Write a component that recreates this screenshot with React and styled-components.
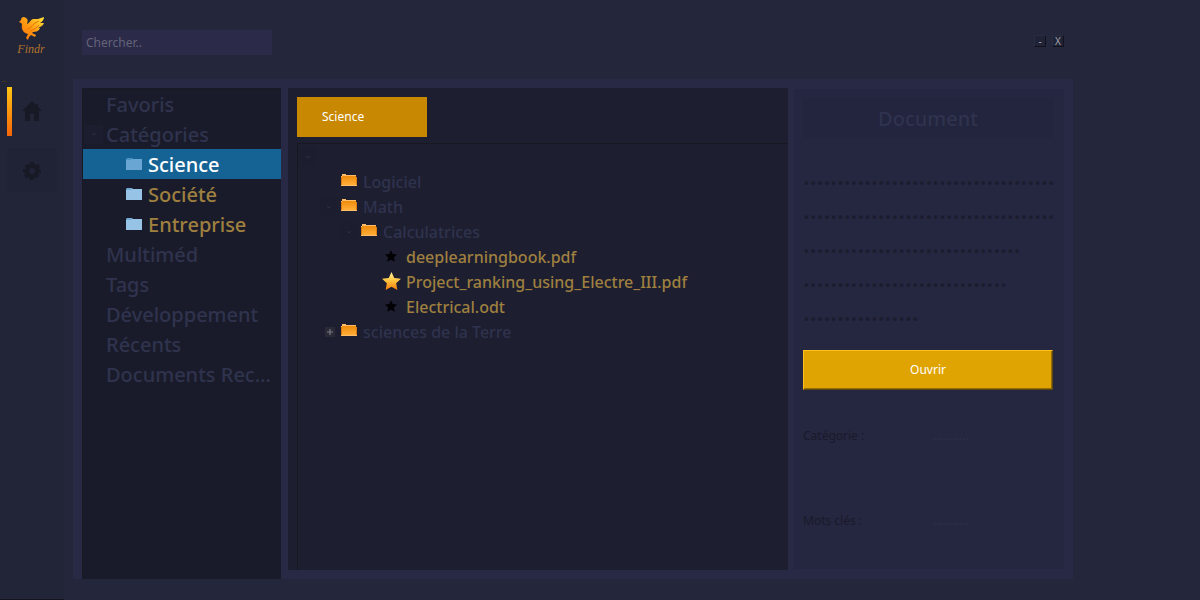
import React from "react";
import styled, { createGlobalStyle } from "styled-components";

const GlobalStyle = createGlobalStyle`
  * { box-sizing: border-box; }
  body {
    margin: 0;
    background: #24263b;
    font-family: "Noto Sans", sans-serif;
    font-size: 12px;
  }
  button, input { font-family: inherit; font-size: inherit; }
  ul { list-style: none; margin: 0; padding: 0; }
`;

const Window = styled.div`
  display: flex;
  min-height: 100vh;
`;

const Sidebar = styled.nav`
  display: flex;
  flex-direction: column;
  flex: 0 0 64px;
  background: #222438;
  border-bottom: 1px solid #14131f;
`;

const Brand = styled.div`
  display: flex;
  flex-direction: column;
  align-items: center;
  height: 80px;
  margin-right: 2px;
  padding-top: 16px;
`;

const BrandName = styled.span`
  display: block;
  margin-top: 1px;
  font-family: "Liberation Serif", serif;
  font-style: italic;
  font-size: 12px;
  line-height: 16px;
  color: #b0742c;
`;

const SideMark = styled.span`
  width: 5px;
  height: 1px;
  margin: 1px 0 5px 2px;
  background: #3c3528;
`;

const SideItem = styled.button`
  display: flex;
  align-items: center;
  justify-content: center;
  align-self: flex-start;
  width: 50px;
  height: ${(p) => (p.$active ? 49 : 44)}px;
  margin: 0 0 12px 7px;
  padding: ${(p) => (p.$active ? "0 5px 2px 0" : "2px 5px 0")};
  border: 0;
  border-left: ${(p) => (p.$active ? "5px solid" : "0")};
  border-image: ${(p) => (p.$active ? "linear-gradient(#ffc814, #f56208) 1" : "none")};
  background: ${(p) => (p.$active ? "transparent" : "#202236")};
`;

const Main = styled.main`
  display: flex;
  flex-direction: column;
  flex: 1;
  min-width: 0;
  padding: 0 127px 21px 9px;
`;

const Toolbar = styled.header`
  display: flex;
  justify-content: space-between;
  align-items: flex-start;
  height: 79px;
  padding: 30px 9px 0 9px;
`;

const Search = styled.input`
  width: 190px;
  height: 25px;
  padding: 0 4px;
  border: 0;
  background: #2b2a49;
  color: #777589;
  &::placeholder { color: #656379; opacity: 1; }
`;

const WindowControls = styled.div`
  display: flex;
  gap: 6px;
  padding-top: 5px;
`;

const ControlButton = styled.button`
  width: 12px;
  height: 12px;
  padding: 0;
  border: 1px solid;
  border-color: #292b41 #11121d #11121d #292b41;
  background: #202235;
  color: #a0a2ad;
  font-size: 10px;
  line-height: 10px;
`;

const Workspace = styled.div`
  display: flex;
  flex: 1;
  padding: 9px 9px 0;
  background: #282945;
`;

const CategoryPanel = styled.aside`
  flex: 0 0 199px;
  margin-right: 7px;
  border: 1px solid #181922;
  border-right: 0;
  border-bottom: 0;
  background: #1a1b2a;
`;

const CategoryRow = styled.li`
  display: flex;
  align-items: flex-start;
  height: 30px;
  padding-left: ${(p) => (p.$expandable ? 1 : p.$child ? 43 : 23)}px;
  background: ${(p) => (p.$selected ? "#156394" : "transparent")};
`;

const CategoryLink = styled.a`
  display: flex;
  align-items: center;
  gap: 6px;
  min-width: 0;
  font-size: 20px;
  font-weight: 500;
  line-height: 32px;
  white-space: nowrap;
  text-decoration: none;
  color: ${(p) => (p.$selected ? "#ffffff" : p.$child ? "#9f803f" : "#2f334e")};
`;

const Toggle = styled.button`
  display: flex;
  align-items: center;
  align-self: center;
  justify-content: center;
  flex: none;
  width: ${(p) => (p.$boxed ? 10 : 19)}px;
  height: ${(p) => (p.$boxed ? 10 : 19)}px;
  margin-right: ${(p) => (p.$boxed ? 6 : 3)}px;
  padding: 0;
  border: 0;
  background: ${(p) => (p.$boxed ? "#292a35" : "#1c1d2f")};
  color: ${(p) => (p.$boxed ? "#777984" : "#2b2e46")};
`;

const FilePanel = styled.section`
  display: flex;
  flex-direction: column;
  flex: 1;
  min-width: 0;
  margin-bottom: 9px;
  padding: 9px 0 0 9px;
  background: #1d1e30;
`;

const TabButton = styled.button`
  width: 130px;
  height: 40px;
  margin-bottom: 6px;
  padding: 0 0 1px 25px;
  border: 0;
  background: #c88802;
  color: #ffffff;
  text-align: left;
`;

const FileTree = styled.ul`
  flex: 1;
  border-top: 1px solid #171820;
  border-left: 1px solid #171820;
`;

const FileRow = styled.li`
  display: flex;
  align-items: center;
  height: 25px;
  padding-left: ${(p) => p.$indent}px;
`;

const FileLink = styled.a`
  display: flex;
  align-items: center;
  gap: ${(p) => (p.$file ? 5 : 6)}px;
  font-size: 16px;
  font-weight: 500;
  line-height: 24px;
  white-space: nowrap;
  text-decoration: none;
  color: ${(p) => (p.$file ? "#9f803f" : "#2f334e")};
`;

const IconBox = styled.span`
  display: flex;
  justify-content: center;
  flex: none;
  width: ${(p) => (p.$wide ? 20 : 16)}px;
  padding-bottom: ${(p) => (p.$raised ? 4 : 1)}px;
`;

const DetailPanel = styled.aside`
  flex: 0 0 270px;
  min-width: 0;
  margin: 1px 0 10px 6px;
  padding: 9px 11px 0 9px;
  background: #252640;
`;

const DetailTitle = styled.h2`
  margin: 0 0 20px;
  height: 40px;
  background: #23243d;
  color: #2f334e;
  font-size: 20px;
  font-weight: 500;
  line-height: 42px;
  text-align: center;
`;

const DottedLine = styled.p`
  margin: 0;
  color: #1b1c2e;
  font-size: 25px;
  font-weight: 500;
  line-height: 34px;
  white-space: nowrap;
`;

const OpenButton = styled.button`
  display: block;
  width: 100%;
  height: 40px;
  margin: 22px 0 0;
  padding: 0 0 2px;
  border: 1px solid;
  border-color: #ffc01c #5b470f #5b470f #ffc01c;
  background: #dfa302;
  box-shadow: inset -1px -1px #946d06;
  color: #ffffff;
`;

const Properties = styled.dl`
  display: grid;
  grid-template-columns: 130px 1fr;
  row-gap: 69px;
  margin: 38px 0 0;
  line-height: 16px;
`;

const PropertyName = styled.dt`
  color: #191a2b;
`;

const PropertyValue = styled.dd`
  margin: 0;
  color: #30324c;
`;

const BirdLogo = () => (
  <svg width="28" height="24" viewBox="0 0 28 24" aria-hidden="true">
    <defs>
      <linearGradient id="flame" x1="0" y1="1" x2="1" y2="0">
        <stop offset="0" stopColor="#fb6d08" />
        <stop offset="0.5" stopColor="#ff9810" />
        <stop offset="1" stopColor="#ffe53a" />
      </linearGradient>
    </defs>
    <path
      fill="url(#flame)"
      d="M2 6L4 4C4 1 7 0 9 2C11 3 11 5 10 8C12 8 13 4 16 3L21 3L27 1C27 4 25 6 23 7L27 7C26 10 23 11 21 12L23 12C22 15 19 16 16 16L15 17L19 19L18 21L14 19L12 21L11 24L9 22L11 18C6 17 4 13 5 8L4 7Z"
    />
    <path fill="none" stroke="#e87508" strokeWidth="1" d="M10 13C13 13 15 10 18 7L22 5M13 15C17 14 19 12 22 9" />
  </svg>
);

const HomeIcon = () => (
  <svg width="20" height="20" viewBox="0 0 20 20" fill="#171925" aria-hidden="true">
    <path d="M10 0L14 4V3H16V6L20 10H17V20H12V13H8V20H3V10H0Z" />
  </svg>
);

const GearIcon = () => (
  <svg width="18" height="18" viewBox="0 0 18 18" fill="#171925" aria-hidden="true">
    <path
      fillRule="evenodd"
      d="M7 0H11L12 3L15 2L17 5L15 7L18 8V11L15 11L16 14L13 16L11 15L10 18H7L6 15L3 16L1 13L3 11L0 10V7L3 7L2 4L5 2L7 3ZM9 6A3 3 0 1 0 9 12A3 3 0 1 0 9 6Z"
    />
  </svg>
);

const Chevron = () => (
  <svg width="6" height="4" viewBox="0 0 6 4" fill="none" stroke="currentColor" aria-hidden="true">
    <path d="M1 1L3 3L5 1" />
  </svg>
);

const Plus = () => (
  <svg width="6" height="6" viewBox="0 0 5 5" stroke="currentColor" aria-hidden="true">
    <path d="M0 2.5H5M2.5 0V5" />
  </svg>
);

const BlueFolder = ({ selected }) => (
  <svg width="16" height="14" viewBox="0 0 16 14" aria-hidden="true">
    <path fill={selected ? "#4d91c1" : "#73a9d3"} d="M1 0H6L7 1H15V3H0V1Z" />
    <path fill={selected ? "#69a6d3" : "#96c3e6"} d="M0 2H5L6 1H16V12H0Z" />
  </svg>
);

const OrangeFolder = () => (
  <svg width="16" height="12" viewBox="0 0 16 12" aria-hidden="true">
    <defs>
      <linearGradient id="folder" x1="0" y1="0" x2="0" y2="1">
        <stop offset="0" stopColor="#ee8b0c" />
        <stop offset="1" stopColor="#ffae39" />
      </linearGradient>
    </defs>
    <path fill="#ffbd69" d="M1 0H5V1H15V3H16V12H0V2H1Z" />
    <path fill="url(#folder)" d="M1 2H15V11H1Z" />
    <path fill="#d87c13" d="M0 3H1V11H0ZM15 3H16V11H15Z" />
  </svg>
);

const Star = ({ gold }) => (
  <svg width={gold ? 19 : 12} height={gold ? 18 : 12} viewBox="0 0 20 19" aria-hidden="true">
    <defs>
      <linearGradient id="gold" x1="0" y1="0" x2="0" y2="1">
        <stop offset="0" stopColor="#fff3a0" />
        <stop offset="0.45" stopColor="#ffc743" />
        <stop offset="1" stopColor="#f87908" />
      </linearGradient>
    </defs>
    <path
      fill={gold ? "url(#gold)" : "#020204"}
      d="M10 0L12.9 6.3L20 7.2L14.9 11.9L16.2 19L10 15.6L3.8 19L5.1 11.9L0 7.2L7.1 6.3Z"
    />
  </svg>
);

const categories = [
  { label: "Favoris" },
  { label: "Catégories", expandable: true },
  { label: "Science", child: true, selected: true },
  { label: "Société", child: true },
  { label: "Entreprise", child: true },
  { label: "Multiméd" },
  { label: "Tags" },
  { label: "Développement" },
  { label: "Récents" },
  { label: "Documents Rec..." },
];

const files = [
  { indent: 0, open: true },
  { indent: 43, label: "Logiciel" },
  { indent: 21, label: "Math", open: true },
  { indent: 41, label: "Calculatrices", open: true },
  { indent: 83, label: "deeplearningbook.pdf", file: true },
  { indent: 83, label: "Project_ranking_using_Electre_III.pdf", file: true, gold: true },
  { indent: 83, label: "Electrical.odt", file: true },
  { indent: 27, label: "sciences de la Terre", closed: true },
];

const summaryDots = [37, 37, 32, 30, 17];

export default function App() {
  return (
    <>
      <GlobalStyle />
      <Window>
        <Sidebar>
          <Brand>
            <BirdLogo />
            <BrandName>Findr</BrandName>
          </Brand>
          <SideMark />
          <SideItem $active aria-label="Accueil"><HomeIcon /></SideItem>
          <SideItem aria-label="Paramètres"><GearIcon /></SideItem>
        </Sidebar>
        <Main>
          <Toolbar>
            <Search type="text" placeholder="Chercher.." aria-label="Chercher" />
            <WindowControls>
              <ControlButton>-</ControlButton>
              <ControlButton>X</ControlButton>
            </WindowControls>
          </Toolbar>
          <Workspace>
            <CategoryPanel>
              <ul>
                {categories.map((c) => (
                  <CategoryRow key={c.label} $child={c.child} $selected={c.selected} $expandable={c.expandable}>
                    {c.expandable && <Toggle aria-label="Replier"><Chevron /></Toggle>}
                    <CategoryLink href="#" $child={c.child} $selected={c.selected}>
                      {c.child && <BlueFolder selected={c.selected} />}
                      {c.label}
                    </CategoryLink>
                  </CategoryRow>
                ))}
              </ul>
            </CategoryPanel>
            <FilePanel>
              <TabButton>Science</TabButton>
              <FileTree>
                {files.map((f) => (
                  <FileRow key={f.label || "root"} $indent={f.indent}>
                    {f.open && <Toggle aria-label="Replier"><Chevron /></Toggle>}
                    {f.closed && <Toggle $boxed aria-label="Déplier"><Plus /></Toggle>}
                    {f.label && (
                      <FileLink href="#" $file={f.file}>
                        <IconBox $wide={f.file} $raised={!f.file}>
                          {f.file ? <Star gold={f.gold} /> : <OrangeFolder />}
                        </IconBox>
                        {f.label}
                      </FileLink>
                    )}
                  </FileRow>
                ))}
              </FileTree>
            </FilePanel>
            <DetailPanel>
              <DetailTitle>Document</DetailTitle>
              {summaryDots.map((n, i) => (
                <DottedLine key={i}>{".".repeat(n)}</DottedLine>
              ))}
              <OpenButton>Ouvrir</OpenButton>
              <Properties>
                <PropertyName>Catégorie :</PropertyName>
                <PropertyValue>...........</PropertyValue>
                <PropertyName>Mots clés :</PropertyName>
                <PropertyValue>...........</PropertyValue>
              </Properties>
            </DetailPanel>
          </Workspace>
        </Main>
      </Window>
    </>
  );
}
